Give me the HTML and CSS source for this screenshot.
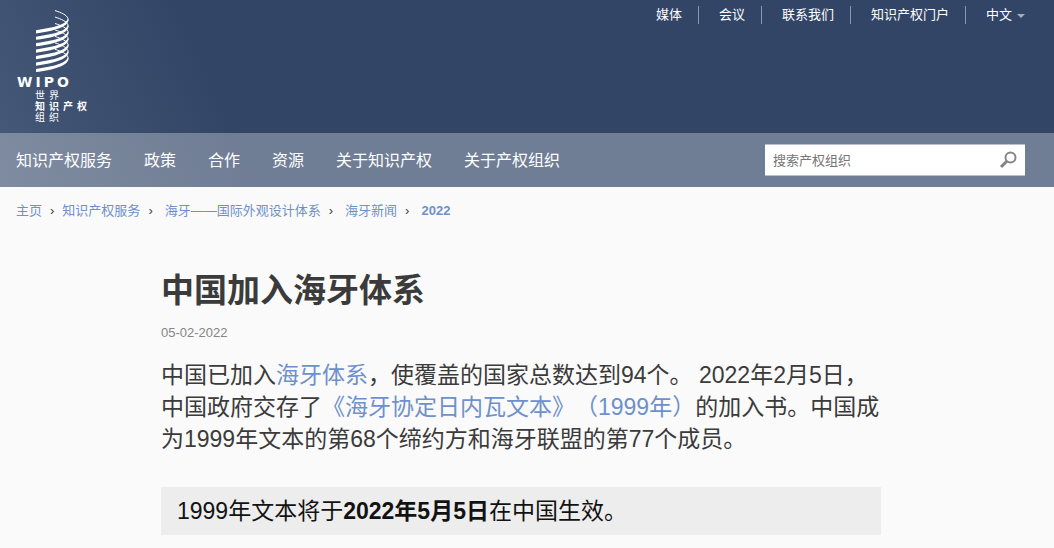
FILE: index.html
```
<!DOCTYPE html>
<html lang="zh-CN">
<head>
  <meta charset="UTF-8">
  <meta name="viewport" content="width=device-width, initial-scale=1.0">
  <title>中国加入海牙体系</title>
  <link rel="stylesheet" href="styles.css">
</head>
<body>
  <header class="header">
    <div class="header-top">
      <a class="logo" href="#">
        <svg class="logo-mark" width="34" height="64" viewBox="0 0 34 64" aria-hidden="true">
          <defs>
            <g id="band">
              <path d="M0 20.2 C15 18 30 15 32 8.500 L32.500 10.500 C31 17.500 16 21.500 0 23.400 Z" fill="#fff"/>
              <path d="M19 .6 C25 2.500 31 5 32 8.500 V10.500" fill="none" stroke="#fff" stroke-width="1"/>
            </g>
          </defs>
          <use href="#band" y="0"/>
          <use href="#band" y="6.450"/>
          <use href="#band" y="12.900"/>
          <use href="#band" y="19.350"/>
          <use href="#band" y="25.800"/>
          <use href="#band" y="32.250"/>
          <use href="#band" y="38.700"/>
        </svg>
        <span class="logo-name">WIPO</span>
        <span class="logo-sub">世界<br><b>知识产权</b><br>组织</span>
      </a>
      <ul class="top-links">
        <li><a href="#">媒体</a></li>
        <li><a href="#">会议</a></li>
        <li><a href="#">联系我们</a></li>
        <li><a href="#">知识产权门户</a></li>
        <li><a class="language" href="#">中文</a></li>
      </ul>
    </div>

    <div class="navbar">
      <nav class="menu">
        <a href="#">知识产权服务</a>
        <a href="#">政策</a>
        <a href="#">合作</a>
        <a href="#">资源</a>
        <a href="#">关于知识产权</a>
        <a href="#">关于产权组织</a>
      </nav>
      <form class="search">
        <input type="text" placeholder="搜索产权组织" aria-label="搜索产权组织">
        <button type="submit" aria-label="搜索">
          <svg width="18" height="18" viewBox="0 0 18 18" fill="none" stroke="#858585">
            <circle cx="11.500" cy="6.500" r="5" stroke-width="2"/>
            <path d="M8 10 L2 16" stroke-width="3"/>
          </svg>
        </button>
      </form>
    </div>
  </header>

  <ol class="breadcrumb">
    <li><a href="#">主页</a></li>
    <li><a href="#">知识产权服务</a></li>
    <li><a href="#">海牙——国际外观设计体系</a></li>
    <li><a href="#">海牙新闻</a></li>
    <li><a class="current" href="#">2022</a></li>
  </ol>

  <main class="content">
    <article class="article">
      <h1>中国加入海牙体系</h1>
      <p class="date">05-02-2022</p>
      <p class="lead">中国已加入<a href="#">海牙体系</a>，使覆盖的国家总数达到94个。 2022年2月5日，中国政府交存了<a href="#">《海牙协定日内瓦文本》（1999年）</a>的加入书。中国成为1999年文本的第68个缔约方和海牙联盟的第77个成员。</p>
      <p class="callout">1999年文本将于<strong>2022年5月5日</strong>在中国生效。</p>
    </article>
  </main>
</body>
</html>
```
FILE: styles.css
```
* {
  box-sizing: border-box;
}

body {
  margin: 0;
  background-color: #fafafa;
  color: #3b3b3b;
  font-family: "Liberation Sans", "Noto Sans CJK SC", sans-serif;
  font-size: 13px;
  text-spacing-trim: space-all;
}

a {
  color: #6e90cb;
  text-decoration: none;
}

a:hover {
  text-decoration: underline;
}

/* header */
.header {
  background: linear-gradient(65deg, #485a7a 0, #3c4f6e 120px, #324567 240px);
}

.header-top {
  display: flex;
  justify-content: space-between;
  align-items: flex-start;
  height: 133px;
  padding: 0 29px 0 17px;
}

.logo {
  display: flex;
  flex-direction: column;
  padding-top: 10px;
  color: #fff;
}

.logo-mark {
  margin-left: 19px;
}

.logo-name {
  font-family: "DejaVu Sans", sans-serif;
  font-size: 14px;
  font-weight: bold;
  line-height: 16px;
  letter-spacing: 3px;
}

.logo-sub {
  margin-left: 18px;
  font-size: 10px;
  line-height: 11px;
  letter-spacing: 4px;
}

.top-links {
  display: flex;
  margin: 0;
  padding: 6px 0 0;
  list-style: none;
  line-height: 18px;
}

.top-links li {
  padding: 0 16px 0 20px;
  border-right: 1px solid #8c98ad;
}

.top-links li:last-child {
  padding-right: 0;
  border-right: none;
}

.top-links a {
  color: #fff;
}

.language::after {
  content: "";
  display: inline-block;
  margin-left: 5px;
  border: 4px solid transparent;
  border-top-color: #a5aebf;
  border-bottom: none;
  vertical-align: 1px;
}

.navbar {
  display: flex;
  justify-content: space-between;
  align-items: center;
  height: 54px;
  padding: 0 29px 0 16px;
  background-color: rgba(255, 255, 255, 0.3);
}

.menu {
  display: flex;
  gap: 32px;
  padding-bottom: 3px;
}

.menu a {
  color: #fff;
  font-size: 16px;
}

.search {
  display: flex;
  align-items: center;
  width: 260px;
  height: 32px;
  background-color: #fff;
  border: solid #b9c0ce;
  border-width: 1px 0;
}

.search input {
  flex: 1;
  min-width: 0;
  padding: 0 8px;
  border: none;
  background: none;
  font: inherit;
}

.search input::placeholder {
  color: #757575;
}

.search button {
  display: flex;
  padding: 0 8px;
  border: none;
  background: none;
  cursor: pointer;
}

/* breadcrumb */
.breadcrumb {
  display: flex;
  margin: 0;
  padding: 14px 16px;
  list-style: none;
  line-height: 20px;
}

.breadcrumb li:not(:last-child)::after {
  content: "›";
  margin: 0 12px 0 8px;
}

.breadcrumb li:first-child::after {
  margin-right: 8px;
}

.current {
  font-weight: bold;
}

/* article */
.content {
  padding: 0 16px 12px 4px;
}

.article {
  max-width: 720px;
  margin: 0 auto;
}

.article h1 {
  margin: 36px 0 0;
  font-size: 33px;
  line-height: 40px;
}

.date {
  margin: 12px 0 16px;
  color: #858585;
  line-height: 20px;
}

.lead,
.callout {
  margin: 0;
  font-size: 23px;
  line-height: 32px;
}

.callout {
  margin-top: 32px;
  padding: 8px 16px;
  background-color: #ededed;
  color: #121212;
}
```
